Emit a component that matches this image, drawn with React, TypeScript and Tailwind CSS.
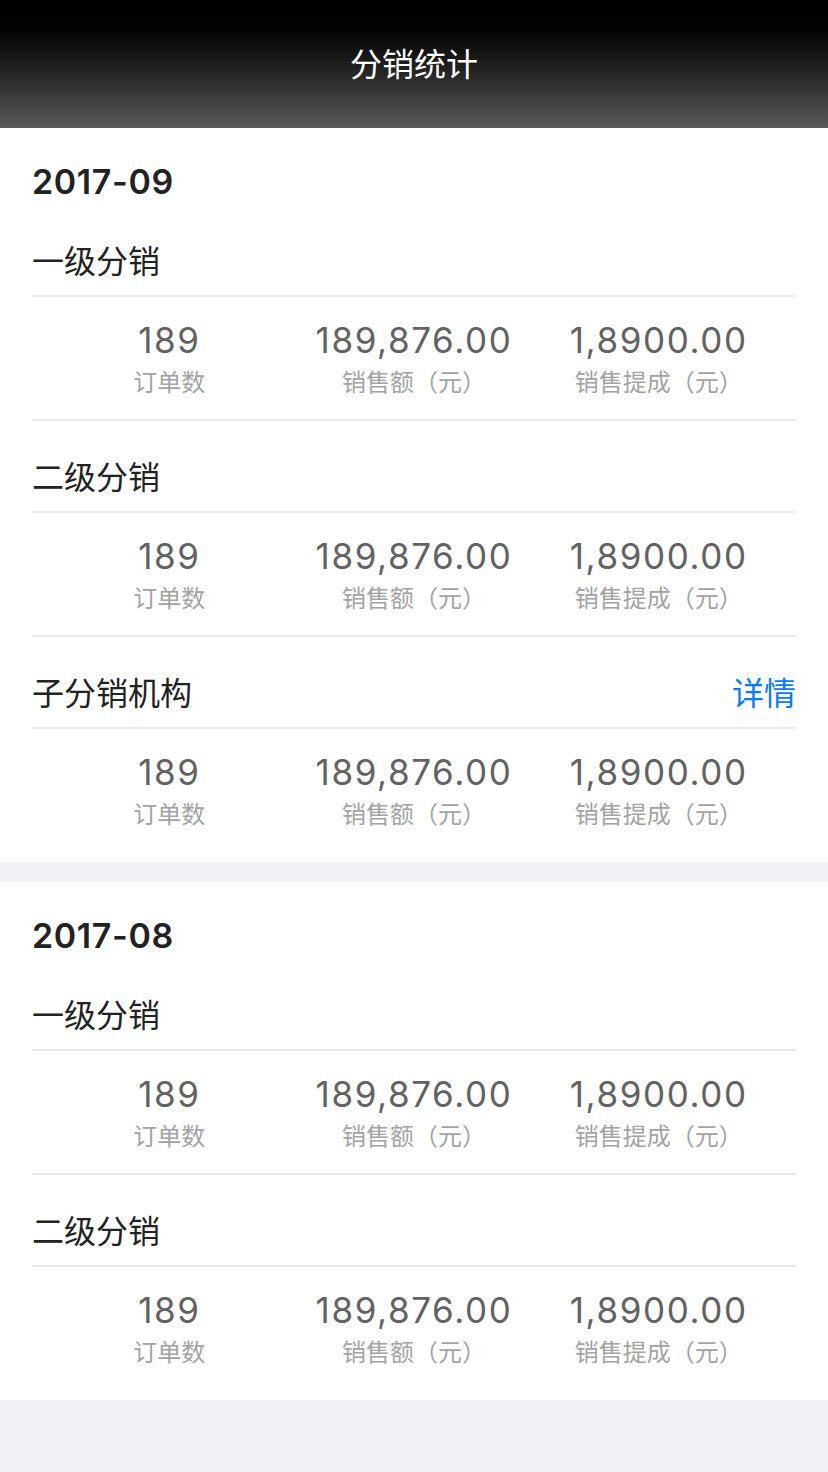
const cjk = "font-['Noto_Sans_CJK_SC',sans-serif]"
const num = "font-['Inter','Noto_Sans_CJK_SC',sans-serif]"

type Group = { title: string; detail?: boolean }

const months: { month: string; groups: Group[] }[] = [
  {
    month: "2017-09",
    groups: [{ title: "一级分销" }, { title: "二级分销" }, { title: "子分销机构", detail: true }],
  },
  {
    month: "2017-08",
    groups: [{ title: "一级分销" }, { title: "二级分销" }],
  },
]

const stats = [
  { value: "189", label: "订单数" },
  { value: "189,876.00", label: "销售额（元）" },
  { value: "1,8900.00", label: "销售提成（元）" },
]

function StatRow({ last }: { last: boolean }) {
  return (
    <div className={`grid grid-cols-3 px-[15px] pt-[23px] ${last ? "pb-[35px]" : "pb-[24px] border-b-2 border-[#e9e9ee]"}`}>
      {stats.map((s) => (
        <div key={s.label} className="flex flex-col items-center">
          <div className={`${num} text-[35px] leading-[40px] tracking-[1.6px] text-[#626262]`}>{s.value}</div>
          <div className={`${cjk} mt-[7px] text-[24px] leading-[28px] text-[#a3a3a3]`}>{s.label}</div>
        </div>
      ))}
    </div>
  )
}

export default function App() {
  return (
    <div className="min-h-screen bg-[#f2f1f6]">
      <header className="h-[128px] pb-[4px] bg-linear-to-b from-[#000000] to-[#5a5a5a] flex items-center justify-center">
        <h1 className={`${cjk} text-[32px] leading-[40px] text-white`}>分销统计</h1>
      </header>

      <div className="flex flex-col gap-[20px]">
        {months.map((m) => (
          <section key={m.month} className="bg-white px-[32px] pt-[34px]">
            <div className={`${num} text-[34px] leading-[40px] font-semibold tracking-[0.6px] text-[#222222] mb-[3px]`}>{m.month}</div>
            {m.groups.map((g, i) => (
              <div key={g.title}>
                <div className="flex items-center justify-between pt-[34px] pb-[16px] border-b-2 border-[#e9e9ee]">
                  <span className={`${cjk} text-[32px] leading-[40px] text-[#222222]`}>{g.title}</span>
                  {g.detail && <span className={`${cjk} text-[32px] leading-[40px] text-[#0a7bf5]`}>详情</span>}
                </div>
                <StatRow last={i === m.groups.length - 1} />
              </div>
            ))}
          </section>
        ))}
      </div>
    </div>
  )
}
